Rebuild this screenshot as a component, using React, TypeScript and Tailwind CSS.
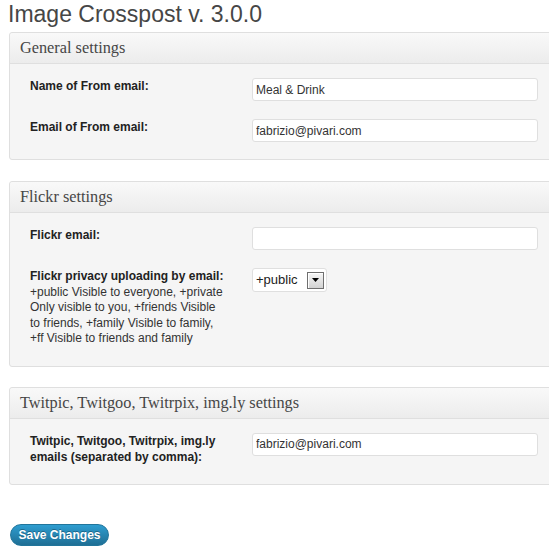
import React from "react";

const sans = "font-['Liberation_Sans',Arial,sans-serif]";

function Panel({
  title,
  className,
  children,
}: {
  title: string;
  className?: string;
  children: React.ReactNode;
}) {
  return (
    <div
      className={`ml-[9px] w-[560px] rounded-[3px] border border-[#dfdfdf] bg-[#f5f5f5] ${className ?? ""}`}
    >
      <div className="h-[31px] rounded-t-[3px] border-b border-[#dfdfdf] bg-linear-to-b from-[#f9f9f9] to-[#ececec] pl-[10px] font-['Liberation_Serif',Georgia,serif] text-[16.3px] leading-[30px] text-[#464646]">
        {title}
      </div>
      <div className="flex flex-col gap-[18px] pb-[17px] pl-[20px] pt-[14px]">{children}</div>
    </div>
  );
}

function Row({ label, children }: { label: React.ReactNode; children: React.ReactNode }) {
  return (
    <div className="flex items-start">
      <div className="w-[222px] pb-[2px] pt-[1px] text-[12px] leading-[15.6px] text-[#222]">
        <div className="w-[200px]">{label}</div>
      </div>
      {children}
    </div>
  );
}

function TextInput({ value }: { value: string }) {
  return (
    <input
      type="text"
      defaultValue={value}
      className="h-[23px] w-[286px] rounded-[3px] border border-[#dfdfdf] bg-white px-[3px] text-[12px] text-[#333] outline-none"
    />
  );
}

function PrivacySelect() {
  return (
    <div className="flex h-[24px] w-[75px] items-center justify-between rounded-[3px] border border-[#dfdfdf] bg-white pl-[3px] pr-[2px]">
      <span className="text-[13px] text-[#222]">+public</span>
      <span className="flex h-[17px] w-[17px] items-center justify-center border border-[#6f6f6f] bg-linear-to-b from-[#f6f6f6] to-[#d2d2d2] shadow-[inset_1px_1px_0_#ffffff]">
        <svg width="7" height="4" viewBox="0 0 7 4">
          <path d="M0 0h7L3.5 4z" fill="#000" />
        </svg>
      </span>
    </div>
  );
}

export default function App() {
  return (
    <div className={`h-[549px] w-[549px] overflow-hidden bg-white ${sans}`}>
      <h2 className="h-[32px] pl-[8px] text-[23px] font-normal leading-[29px] text-[#464646]">
        Image Crosspost v. 3.0.0
      </h2>

      <Panel title="General settings">
        <Row label={<span className="font-bold">Name of From email:</span>}>
          <TextInput value="Meal & Drink" />
        </Row>
        <Row label={<span className="font-bold">Email of From email:</span>}>
          <TextInput value="fabrizio@pivari.com" />
        </Row>
      </Panel>

      <Panel title="Flickr settings" className="mt-[21px]">
        <Row label={<span className="font-bold">Flickr email:</span>}>
          <TextInput value="" />
        </Row>
        <Row
          label={
            <>
              <span className="block font-bold">Flickr privacy uploading by email:</span>
              <span className="block text-[#333]">+public Visible to everyone, +private</span>
              <span className="block text-[#333]">Only visible to you, +friends Visible</span>
              <span className="block text-[#333]">to friends, +family Visible to family,</span>
              <span className="block text-[#333]">+ff Visible to friends and family</span>
            </>
          }
        >
          <PrivacySelect />
        </Row>
      </Panel>

      <Panel title="Twitpic, Twitgoo, Twitrpix, img.ly settings" className="mt-[20px]">
        <Row
          label={
            <span className="font-bold">Twitpic, Twitgoo, Twitrpix, img.ly emails (separated by comma):</span>
          }
        >
          <TextInput value="fabrizio@pivari.com" />
        </Row>
      </Panel>

      <button
        type="button"
        className="ml-[10px] mt-[39px] h-[22px] w-[99px] rounded-full border border-[#21759b] bg-linear-to-b from-[#2e9dd0] to-[#1f6f95] text-[12px] font-bold text-white [text-shadow:0_-1px_0_rgba(0,0,0,0.3)]"
      >
        Save Changes
      </button>
    </div>
  );
}
